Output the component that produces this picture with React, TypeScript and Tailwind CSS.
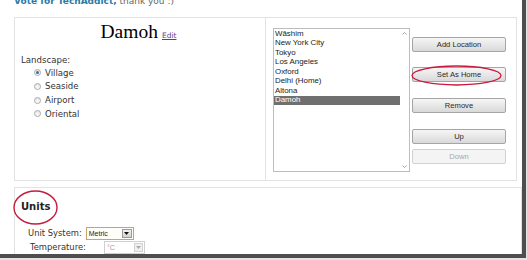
import React from "react";

const sans = { fontFamily: '"DejaVu Sans", Verdana, sans-serif' };
const arial = { fontFamily: '"Liberation Sans", Arial, sans-serif' };

function Radio({ label, checked }: { label: string; checked?: boolean }) {
  return (
    <div className="flex h-[13.7px] items-center pl-[19px]">
      <span className="flex h-[7px] w-[7px] items-center justify-center rounded-full border border-[#a9a9a9] bg-gradient-to-b from-[#e6e6e6] to-[#fdfdfd]">
        {checked && <span className="h-[3px] w-[3px] rounded-full bg-[#3d6e9e]" />}
      </span>
      <span className="ml-[4px] text-[8.6px] leading-none text-[#333]" style={sans}>
        {label}
      </span>
    </div>
  );
}

function Btn({ label, disabled, className = "" }: { label: string; disabled?: boolean; className?: string }) {
  return (
    <div
      className={
        "flex h-[15px] w-[94px] items-center justify-center rounded-[2px] border text-[7.6px] leading-none " +
        (disabled
          ? "border-[#d2d2d2] bg-[#f4f4f4] text-[#a8a8a8] "
          : "border-[#a5a5a5] bg-gradient-to-b from-[#f6f6f6] to-[#d9d9d9] text-[#2a2a2a] ") +
        className
      }
      style={arial}
    >
      {label}
    </div>
  );
}

const cities = ["Wāshim", "New York City", "Tokyo", "Los Angeles", "Oxford", "Delhi (Home)", "Altona", "Damoh"];

export default function App() {
  return (
    <div className="h-[260px] w-[527px] overflow-hidden bg-[#e4e4e4]">
      <div className="h-[258px] w-[526px] overflow-hidden border-b-4 border-r-4 border-[#4e4e4e] bg-white pl-[14px]">
        {/* cut-off header text */}
        <div className="h-[17px] overflow-hidden">
          <p className="-mt-[5px] text-[9px] leading-[12px] text-[#666]" style={sans}>
            <span className="font-bold text-[#2a7aa6]">Vote for TechAddict,</span> thank you :)
          </p>
        </div>

        {/* two panels */}
        <div className="flex">
          <div className="h-[164px] w-[252px] border border-[#e3e3e3]">
            <div className="flex items-baseline justify-center pt-[4px] pr-[3px]">
              <span className="text-[19.5px] leading-[20px] text-black" style={{ fontFamily: '"Liberation Serif", "Times New Roman", serif' }}>
                Damoh
              </span>
              <span className="ml-[4px] text-[7.5px] text-[#5b3f8e] underline" style={sans}>
                Edit
              </span>
            </div>
            <div className="mt-[12px] flex h-[12px] items-center pl-[6px] text-[8.6px] leading-none text-[#333]" style={sans}>
              Landscape:
            </div>
            <Radio label="Village" checked />
            <Radio label="Seaside" />
            <Radio label="Airport" />
            <Radio label="Oriental" />
          </div>

          <div className="h-[164px] w-[251px] border-y border-r border-[#e3e3e3]">
            <div className="flex items-start pl-[7px] pt-[10px]">
              <div className="relative h-[144px] w-[137px] border border-[#bdbdbd] bg-white" style={arial}>
                <div className="w-[126px] pt-0">
                  {cities.map((c, i) => (
                    <div
                      key={c}
                      className={
                        "flex h-[9.5px] items-center pl-[1px] text-[7.9px] leading-none " +
                        (i === cities.length - 1 ? "bg-[#6f6f6f] text-white" : "text-[#222]")
                      }
                    >
                      {c}
                    </div>
                  ))}
                </div>
                <div className="absolute right-0 top-0 flex h-full w-[10px] flex-col items-center justify-between py-[3px]">
                  <svg width="5" height="3" viewBox="0 0 5 3">
                    <path d="M0.5 2.5 L2.5 0.5 L4.5 2.5" stroke="#9a9a9a" strokeWidth="0.9" fill="none" />
                  </svg>
                  <svg width="5" height="3" viewBox="0 0 5 3">
                    <path d="M0.5 0.5 L2.5 2.5 L4.5 0.5" stroke="#9a9a9a" strokeWidth="0.9" fill="none" />
                  </svg>
                </div>
              </div>
              <div className="ml-[2px] flex flex-col pt-[9px]">
                <Btn label="Add Location" />
                <div className="relative mt-[15px]">
                  <Btn label="Set As Home" />
                  <svg className="pointer-events-none absolute -left-[1px] -top-[2px]" width="92" height="22" viewBox="0 0 92 22">
                    <ellipse cx="45.5" cy="10.5" rx="44.5" ry="9.5" fill="none" stroke="#c81a40" strokeWidth="1.3" />
                  </svg>
                </div>
                <Btn label="Remove" className="mt-[16px]" />
                <Btn label="Up" className="mt-[16px]" />
                <Btn label="Down" disabled className="mt-[5px]" />
              </div>
            </div>
          </div>
        </div>

        {/* units */}
        <div className="relative mt-[6px] h-[80px] w-[508px] border-x border-t border-[#e3e3e3]">
          <div className="pl-[6px] pt-[13px] text-[10px] font-bold leading-[12px] text-[#222]" style={sans}>
            Units
          </div>
          <svg className="pointer-events-none absolute -left-[2px] top-[2px]" width="46" height="36" viewBox="0 0 46 36">
            <ellipse cx="22.5" cy="17.5" rx="21.5" ry="16.5" fill="none" stroke="#c81a40" strokeWidth="1.4" />
          </svg>
          <div className="mt-[13px] flex h-[14px] items-center pl-[13px]">
            <span className="text-[8.4px] leading-none text-[#333]" style={sans}>
              Unit System:
            </span>
            <div className="ml-[4px] flex h-[13px] w-[48px] items-center justify-between border border-[#c6a56c] bg-[#fffdf8] pl-[2px] pr-[1px]" style={arial}>
              <span className="text-[7px] leading-none text-[#222]">Metric</span>
              <span className="flex h-[9px] w-[10px] items-center justify-center border border-[#9a9a9a] bg-gradient-to-b from-[#f2f2f2] to-[#d4d4d4]">
                <svg width="5" height="3" viewBox="0 0 5 3">
                  <path d="M0 0 L5 0 L2.5 3 Z" fill="#111" />
                </svg>
              </span>
            </div>
          </div>
          <div className="flex h-[14px] items-center pl-[15px]">
            <span className="text-[8.4px] leading-none text-[#333]" style={sans}>
              Temperature:
            </span>
            <div className="ml-[18px] flex h-[13px] w-[41px] items-center justify-between border border-[#cfcfcf] bg-white pl-[2px] pr-[1px]" style={arial}>
              <span className="text-[7px] leading-none text-[#9a9a9a]">°C</span>
              <span className="flex h-[9px] w-[9px] items-center justify-center border border-[#d0d0d0] bg-[#f0f0f0]">
                <svg width="5" height="3" viewBox="0 0 5 3">
                  <path d="M0 0 L5 0 L2.5 3 Z" fill="#aaa" />
                </svg>
              </span>
            </div>
          </div>
        </div>
      </div>
    </div>
  );
}
